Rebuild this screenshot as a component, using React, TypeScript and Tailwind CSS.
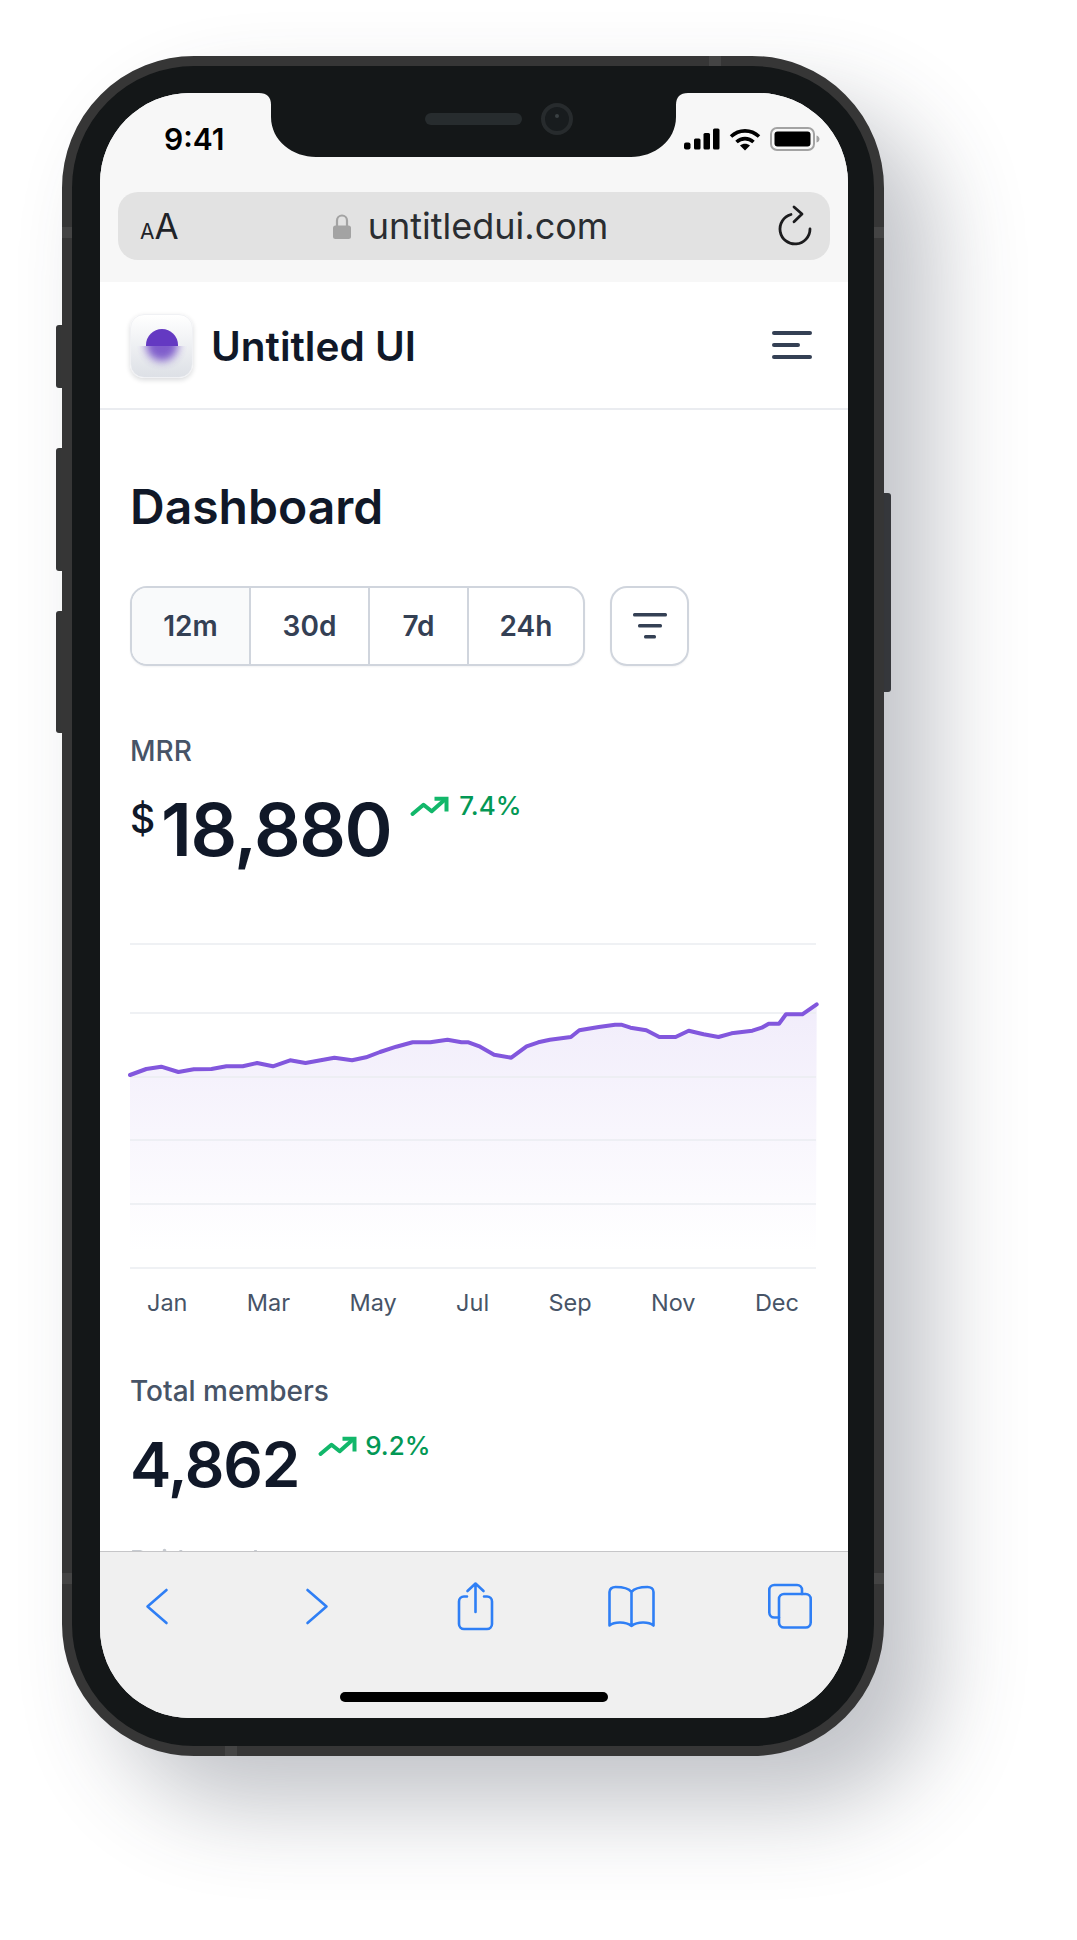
import React from 'react';

// traced from the reference chart crop (crop px -> chart px)
const rawLine = [
  [43, 465], [78, 447], [110, 440], [147, 456], [180, 448], [218, 447], [250, 439], [285, 439], [316, 429], [350, 439],
  [387, 421], [420, 429], [482, 413], [520, 421], [550, 412], [580, 396], [615, 380], [650, 367], [688, 367], [725, 359],
  [755, 367], [770, 367], [795, 380], [825, 404], [862, 413], [895, 379], [920, 367], [945, 359], [990, 351], [1008, 331],
  [1050, 321], [1085, 314], [1098, 314], [1118, 323], [1152, 331], [1180, 351], [1215, 351], [1243, 332], [1275, 343],
  [1307, 351], [1335, 340], [1380, 332], [1400, 323], [1415, 311], [1437, 311], [1452, 283], [1487, 283], [1518, 253],
];
const linePts = rawLine.map(([x, y]) => [(x - 43) / 2.148, y / 3 - 23]);
const linePath = linePts.map(([x, y], i) => `${i === 0 ? 'M' : 'L'}${x.toFixed(1)} ${y.toFixed(1)}`).join(' ');
const months = ['Jan', 'Mar', 'May', 'Jul', 'Sep', 'Nov', 'Dec'];
const ranges = [
  { label: '12m', w: 'w-[119px] bg-[#f9fafb] border-r-2' },
  { label: '30d', w: 'w-[119px] border-r-2' },
  { label: '7d', w: 'w-[99px] border-r-2' },
  { label: '24h', w: 'w-[114px]' },
];

function TrendIcon() {
  return (
    <svg width="40" height="22" viewBox="0 0 40 22" fill="none" stroke="#12b76a" strokeWidth="4" strokeLinecap="round" strokeLinejoin="round">
      <path d="M3.5 19 14.5 9.7 22.7 16.3 36.5 4" />
      <path d="M25.5 3.7H37.5V16.5" strokeLinecap="butt" strokeLinejoin="miter" />
    </svg>
  );
}

function Trend({ value, gap }: { value: string; gap: string }) {
  return (
    <div className={`flex items-center ${gap}`}>
      <TrendIcon />
      <span className="text-[26px] leading-[32px] font-medium text-[#039855]">{value}</span>
    </div>
  );
}

function StatusIcons() {
  return (
    <div className="flex items-center gap-[9px]">
      <svg width="36" height="22" viewBox="0 0 36 22" fill="#000">
        <rect x="0" y="14.5" width="6.5" height="7" rx="2" />
        <rect x="10" y="10.5" width="6.5" height="11" rx="1.5" />
        <rect x="19.5" y="5" width="6.5" height="16.5" rx="1.5" />
        <rect x="29" y="0.5" width="6.5" height="21" rx="1.5" />
      </svg>
      <svg width="32" height="23" viewBox="0 0 32 23" fill="none" stroke="#000" strokeWidth="3.6">
        <path d="M2 8.5C10 1 22 1 30 8.5" />
        <path d="M7.5 14C12.5 9.5 19.5 9.5 24.5 14" />
        <path d="M11 17.5C14 15 18 15 21 17.5L16 22.5Z" fill="#000" stroke="none" />
      </svg>
      <svg width="50" height="24" viewBox="0 0 50 24" fill="none">
        <rect x="1" y="1" width="43" height="22" rx="6" stroke="#a3a3a3" strokeWidth="2" />
        <rect x="4.5" y="4.5" width="36" height="15" rx="3" fill="#000" />
        <path d="M46.5 8.5C48.5 9 49.5 10.5 49.5 12S48.5 15 46.5 15.5Z" fill="#a3a3a3" />
      </svg>
    </div>
  );
}

function BrowserBar() {
  return (
    <div className="bg-[#f7f7f7] h-[189px] shrink-0 flex flex-col">
      <div className="h-[92px] shrink-0 flex items-center justify-between pl-[64px] pr-[28px]">
        <span className="text-[30px] leading-[34px] font-semibold text-black">9:41</span>
        <StatusIcons />
      </div>
      <div className="mx-[18px] mt-[7px] h-[68px] rounded-[20px] bg-[#e2e2e2] flex items-center justify-between pl-[22px] pr-[19px]">
        <div className="flex items-baseline text-[#1f2328] leading-none w-[37px]">
          <span className="text-[21px]">A</span>
          <span className="text-[35px]">A</span>
        </div>
        <div className="flex items-center gap-[17px] mr-[13px]">
          <svg width="18" height="26" viewBox="0 0 18 26" fill="none">
            <path d="M4 13V7.5a5 5 0 0 1 10 0V13" stroke="#a3a3a3" strokeWidth="2.2" />
            <rect x="0" y="12.5" width="18" height="13.5" rx="2.5" fill="#a3a3a3" />
          </svg>
          <span className="text-[36px] leading-[44px] text-[#2a2d31]">untitledui.com</span>
        </div>
        <svg width="36" height="42" viewBox="0 0 36 42" fill="none" stroke="#1c1c1e" strokeWidth="2.8" strokeLinecap="round" strokeLinejoin="round" className="-mr-[2px]">
          <path d="M14 9.5A15 15 0 1 0 33 24" />
          <path d="M17 2 25 9 17 16.7" />
        </svg>
      </div>
    </div>
  );
}

function Logo() {
  return (
    <div className="relative w-[63px] h-[64px] rounded-[14px] bg-gradient-to-b from-white to-[#dde0e6] border border-[#f0f1f4] shadow-[0_2px_5px_rgba(16,24,40,0.16)] overflow-hidden">
      <div className="absolute left-[15px] top-[14px] w-[32px] h-[17px] rounded-t-full bg-[#6439c2]" />
      <div className="absolute left-0 right-0 top-[31px] bottom-0 overflow-hidden">
        <div className="absolute left-[15px] -top-[17px] w-[32px] h-[32px] rounded-full bg-[#6439c2] blur-[4px] opacity-80" />
      </div>
    </div>
  );
}

function Chart() {
  const ys = [1, 70, 134, 197, 261, 325];
  return (
    <svg width="687" height="326" viewBox="0 0 687 326" fill="none" className="block overflow-visible">
      <defs>
        <linearGradient id="mrrFill" x1="0" y1="60" x2="0" y2="310" gradientUnits="userSpaceOnUse">
          <stop offset="0" stopColor="#7f56d9" stopOpacity="0.11" />
          <stop offset="1" stopColor="#7f56d9" stopOpacity="0" />
        </linearGradient>
      </defs>
      <path d={`${linePath} L686 310 L0 310 Z`} fill="url(#mrrFill)" />
      {ys.map(y => (
        <line key={y} x1="0" x2="686" y1={y} y2={y} stroke="#eaecf0" strokeOpacity="0.75" strokeWidth="2" />
      ))}
      <path d={linePath} stroke="#8257dd" strokeWidth="4" strokeLinejoin="round" strokeLinecap="round" />
    </svg>
  );
}

function Toolbar() {
  const icon = { width: 48, height: 48, viewBox: '0 0 48 48', fill: 'none', stroke: '#2f7ff5', strokeWidth: 2.6, strokeLinecap: 'round' as const, strokeLinejoin: 'round' as const, className: 'overflow-visible' };
  return (
    <div className="h-[167px] shrink-0 bg-[#f0f0f0] border-t border-[#c6c6c8] flex flex-col items-center">
      <div className="w-full flex justify-between pl-[33px] pr-[36px] pt-[30px]">
        <svg {...icon}><path d="M33.5 8 14.5 24.5 33.5 41" /></svg>
        <svg {...icon}><path d="M16.5 8 35.5 24.5 16.5 41" /></svg>
        <svg {...icon}>
          <path d="M18 14.5H15a5 5 0 0 0-5 5V42a5 5 0 0 0 5 5H38a5 5 0 0 0 5-5V19.5a5 5 0 0 0-5-5H35" />
          <path d="M26.5 30V1.5M18.5 9l8-7.5L34.5 9" />
        </svg>
        <svg {...icon}>
          <path d="M25.5 10C22.5 6 15.5 5 9.5 5 6 5 3.5 7 3.5 10V43.5C8.5 39.5 19.5 39.5 25.5 44 31.5 39.5 42.5 39.5 47.5 43.5V10C47.5 7 45 5 41.5 5 35.5 5 28.5 6 25.5 10V44" />
        </svg>
        <svg {...icon}>
          <rect x="15" y="12" width="31.7" height="33.5" rx="5" />
          <path d="M15 35.5H10.3a5 5 0 0 1-5-5V8a5 5 0 0 1 5-5H33a5 5 0 0 1 5 5V12" />
        </svg>
      </div>
      <div className="mt-[62px] w-[268px] h-[10px] rounded-full bg-black" />
    </div>
  );
}

export default function App() {
  return (
    <div className="min-h-[1940px] bg-white pl-[62px] pt-[56px] overflow-hidden font-[Inter,sans-serif]">
      <div className="relative w-[822px] h-[1700px]">
        {/* side buttons */}
        <div className="absolute -left-[6px] top-[269px] w-[8px] h-[63px] rounded-l-[3px] bg-[#363636]" />
        <div className="absolute -left-[6px] top-[392px] w-[8px] h-[123px] rounded-l-[3px] bg-[#363636]" />
        <div className="absolute -left-[6px] top-[555px] w-[8px] h-[122px] rounded-l-[3px] bg-[#363636]" />
        <div className="absolute -right-[7px] top-[437px] w-[9px] h-[199px] rounded-r-[3px] bg-[#363636]" />

        <div className="relative h-full rounded-[132px] bg-[#141718] border-[10px] border-[#363636] shadow-[50px_50px_90px_rgba(52,60,75,0.3)] pl-[28px] pr-[26px] pt-[27px] pb-[28px]">
          <div className="relative h-full rounded-[90px] bg-white overflow-hidden flex flex-col">
            <BrowserBar />

            <div className="h-[128px] shrink-0 border-b-2 border-[#eaecf0] flex items-center justify-between pl-[30px] pr-[36px]">
              <div className="flex items-center gap-[18px] mt-[2px]">
                <Logo />
                <span className="text-[40.5px] leading-[48px] font-semibold text-[#101828] mt-[2px]">Untitled UI</span>
              </div>
              <svg width="40" height="28" viewBox="0 0 40 28" fill="#344054">
                <rect x="0" y="0" width="40" height="4" rx="2" />
                <rect x="0" y="12" width="28" height="4" rx="2" />
                <rect x="0" y="24" width="40" height="4" rx="2" />
              </svg>
            </div>

            <div className="flex-1 min-h-0 overflow-hidden px-[30px] pt-[67px]">
              <h1 className="text-[48px] leading-[60px] font-semibold text-[#101828]">Dashboard</h1>

              <div className="mt-[49px] flex gap-[25px]">
                <div className="flex h-[80px] border-2 border-[#d0d5dd] rounded-[17px] overflow-hidden shadow-[0_1px_2px_rgba(16,24,40,0.05)]">
                  {ranges.map(r => (
                    <div key={r.label} className={`${r.w} border-[#d0d5dd] flex items-center justify-center text-[28px] font-semibold text-[#344054]`}>
                      {r.label}
                    </div>
                  ))}
                </div>
                <div className="w-[79px] h-[80px] border-2 border-[#d0d5dd] rounded-[17px] flex items-center justify-center shadow-[0_1px_2px_rgba(16,24,40,0.05)]">
                  <svg width="34" height="26" viewBox="0 0 34 26" fill="#344054">
                    <rect x="0" y="0" width="34" height="3.6" rx="1.5" />
                    <rect x="5" y="11" width="24" height="3.6" rx="1.5" />
                    <rect x="11" y="22" width="12" height="3.6" rx="1.5" />
                  </svg>
                </div>
              </div>

              <div className="mt-[69px] text-[28px] leading-[32px] font-medium text-[#475467]">MRR</div>
              <div className="mt-[16px] flex items-start">
                <span className="mt-[14px] w-[31px] text-[39px] leading-[44px] font-medium text-[#101828]">$</span>
                <span className="text-[73px] leading-[94px] font-semibold tracking-[-0.02em] text-[#101828]">18,880</span>
                <div className="mt-[7px] ml-[18px]"><Trend value="7.4%" gap="gap-[10px]" /></div>
              </div>

              <div className="mt-[66px]"><Chart /></div>
              <div className="mt-[19px] flex justify-between pl-[17px] pr-[19px] text-[23.5px] leading-[30px] text-[#475467]">
                {months.map(m => <span key={m}>{m}</span>)}
              </div>

              <div className="mt-[57px] text-[28px] leading-[32px] font-medium text-[#475467]">Total members</div>
              <div className="mt-[21px] flex items-start">
                <span className="text-[62px] leading-[74px] font-semibold tracking-[-0.02em] text-[#101828]">4,862</span>
                <div className="mt-[2px] ml-[18px]"><Trend value="9.2%" gap="gap-[8px]" /></div>
              </div>

              <div className="mt-[42px] text-[26px] leading-[32px] font-medium text-[#475467] opacity-30">Paid members</div>
            </div>

            <Toolbar />

            {/* notch */}
            <svg width="429" height="64" viewBox="0 0 429 64" className="absolute left-[159px] top-0">
              <path d="M0 0H429C421 0 417 4 417 12V24C417 48 395 64 372 64H57C34 64 12 48 12 24V12C12 4 8 0 0 0Z" fill="#141718" />
              <rect x="166" y="20" width="97" height="12" rx="6" fill="#272c2e" />
              <circle cx="298" cy="26" r="14" fill="#181c1e" stroke="#272b2d" strokeWidth="4" />
              <circle cx="298" cy="23" r="2" fill="#3a4043" />
            </svg>
          </div>
        </div>

        {/* antenna bands */}
        <div className="absolute left-0 top-[171px] w-[10px] h-[11px] bg-[#444]" />
        <div className="absolute right-0 top-[171px] w-[10px] h-[11px] bg-[#444]" />
        <div className="absolute left-0 top-[1517px] w-[10px] h-[11px] bg-[#444]" />
        <div className="absolute right-0 top-[1517px] w-[10px] h-[11px] bg-[#444]" />
        <div className="absolute left-[647px] top-0 w-[12px] h-[10px] bg-[#444]" />
        <div className="absolute left-[163px] bottom-0 w-[12px] h-[10px] bg-[#444]" />
      </div>
    </div>
  );
}
